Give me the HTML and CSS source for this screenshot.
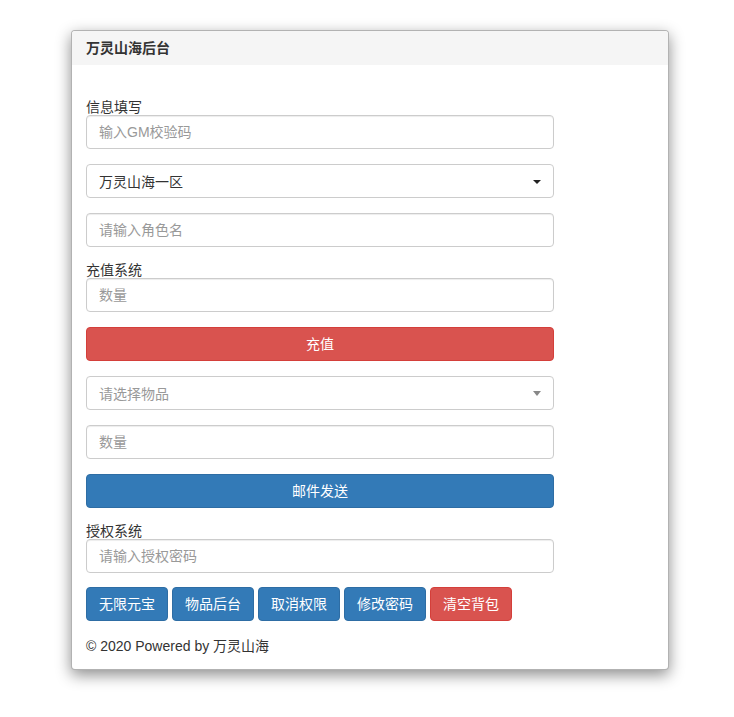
FILE: index.html
```html
<!DOCTYPE html>
<html lang="zh-CN">
<head>
<meta charset="utf-8">
<title>万灵山海后台</title>
<link rel="stylesheet" href="styles.css">
</head>
<body>
<div class="page">
  <div class="panel">
    <div class="panel-heading">万灵山海后台</div>
    <div class="panel-body">
      <form class="form">
        <div class="group">
          <label class="label">信息填写</label>
          <input class="control" type="text" placeholder="输入GM校验码">
        </div>
        <div class="select">
          <span class="select-text">万灵山海一区</span>
          <span class="caret dark"></span>
        </div>
        <input class="control" type="text" placeholder="请输入角色名">
        <div class="group">
          <label class="label">充值系统</label>
          <input class="control" type="text" placeholder="数量">
        </div>
        <button type="button" class="btn btn-danger btn-block">充值</button>
        <div class="select">
          <span class="select-text placeholder">请选择物品</span>
          <span class="caret light"></span>
        </div>
        <input class="control" type="text" placeholder="数量">
        <button type="button" class="btn btn-primary btn-block">邮件发送</button>
        <div class="group">
          <label class="label">授权系统</label>
          <input class="control" type="text" placeholder="请输入授权密码">
        </div>
        <div class="btn-row">
          <button type="button" class="btn btn-primary">无限元宝</button>
          <button type="button" class="btn btn-primary">物品后台</button>
          <button type="button" class="btn btn-primary">取消权限</button>
          <button type="button" class="btn btn-primary">修改密码</button>
          <button type="button" class="btn btn-danger">清空背包</button>
        </div>
      </form>
      <div class="footer">© 2020 Powered by 万灵山海</div>
    </div>
  </div>
</div>
</body>
</html>
```
FILE: styles.css
```css
* { box-sizing: border-box; }
html, body { margin: 0; padding: 0; background: #fff; }
body {
  font-family: "Liberation Sans", Arial, "Noto Sans CJK SC", sans-serif;
  font-size: 14px;
  color: #333;
}
.page { padding: 30px 0 40px 71px; }
.panel {
  width: 598px;
  background: #fff;
  border: 1px solid rgba(0,0,0,0.3);
  border-radius: 4px;
  box-shadow: 0 5px 15px rgba(0,0,0,0.45);
  overflow: hidden;
}
.panel-heading {
  height: 34px;
  line-height: 34px;
  padding: 0 14px;
  background: #f5f5f5;
  font-weight: bold;
  font-size: 14px;
  color: #333;
}
.panel-body { padding: 34px 14px 13px; }
.form {
  width: 468px;
  display: flex;
  flex-direction: column;
  gap: 15px;
}
.group { display: flex; flex-direction: column; }
.label {
  display: block;
  line-height: 16px;
  font-size: 14px;
  color: #333;
}
.control {
  display: block;
  width: 100%;
  height: 34px;
  padding: 6px 12px;
  font-family: inherit;
  font-size: 14px;
  color: #555;
  background: #fff;
  border: 1px solid #ccc;
  border-radius: 4px;
  box-shadow: inset 0 1px 1px rgba(0,0,0,0.075);
  outline: none;
}
.control::placeholder { color: #999; }
.select {
  position: relative;
  display: flex;
  align-items: center;
  height: 34px;
  padding: 0 12px;
  border: 1px solid #ccc;
  border-radius: 4px;
  background: #fff;
}
.select-text { color: #333; }
.select-text.placeholder { color: #999; }
.caret {
  position: absolute;
  right: 12px;
  top: 15px;
  width: 0;
  height: 0;
  border-style: solid;
  border-width: 4px 4px 0 4px;
}
.caret.dark { border-color: #222 transparent transparent transparent; }
.caret.light { border-color: #888 transparent transparent transparent; border-width: 5px 4px 0 4px; top: 14px; }
.btn {
  display: inline-block;
  height: 34px;
  padding: 6px 12px;
  font-family: inherit;
  font-size: 14px;
  line-height: 20px;
  color: #fff;
  border: 1px solid transparent;
  border-radius: 4px;
  cursor: pointer;
}
.btn-block { display: block; width: 100%; }
.btn-primary { background: #337ab7; border-color: #2e6da4; }
.btn-danger { background: #d9534f; border-color: #d43f3a; }
.btn-row { display: flex; gap: 4px; margin-top: -1px; }
.footer {
  margin-top: 15px;
  line-height: 20px;
  color: #333;
}
```
